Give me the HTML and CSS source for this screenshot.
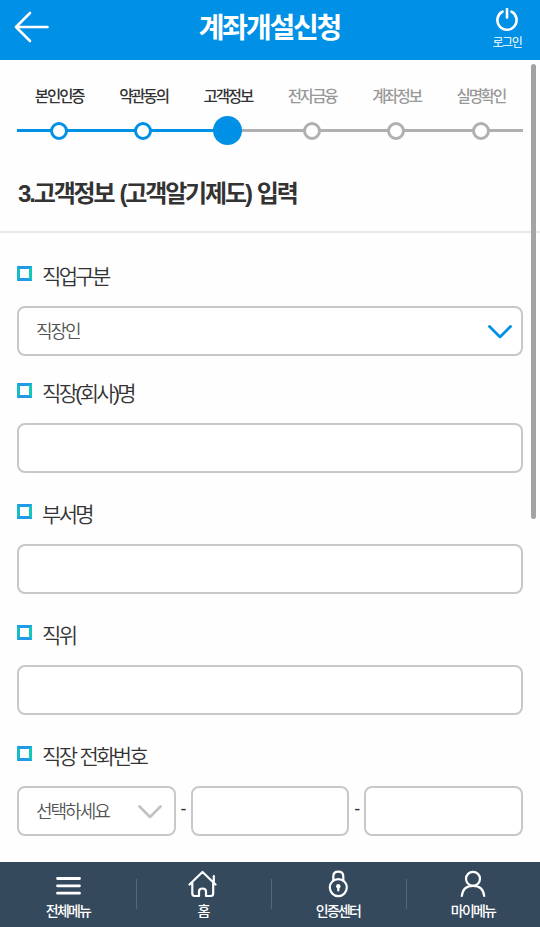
FILE: index.html
```html
<!DOCTYPE html>
<html lang="ko">
<head>
	<meta charset="UTF-8">
	<title>계좌개설신청</title>
	<link rel="stylesheet" href="styles.css">
</head>
<body>
	<div class="header">
		<a class="back">
			<svg width="36" height="32" viewBox="0 0 36 32"><path d="M16 2 2 16 16 30M2 16H33.500"/></svg>
		</a>
		<h1>계좌개설신청</h1>
		<a class="login">
			<svg width="24" height="24" viewBox="0 0 24 24"><path d="M7.500 3.700A9.600 9.600 0 1 0 16.500 3.700M12 1V9.500"/></svg>
			<span>로그인</span>
		</a>
	</div>

	<div class="content">
		<ul class="steps">
			<li class="done">본인인증<i></i></li>
			<li class="done">약관동의<i></i></li>
			<li class="on">고객정보<i></i></li>
			<li>전자금융<i></i></li>
			<li>계좌정보<i></i></li>
			<li>실명확인<i></i></li>
		</ul>
		<h2>3.고객정보 (고객알기제도) 입력</h2>

		<div class="form">
			<div class="row first">
				<label>직업구분</label>
				<div class="box select">
					<span>직장인</span>
					<svg width="24" height="14" viewBox="0 0 24 14"><path d="M1.500 1.500 12 12 22.500 1.500"/></svg>
				</div>
			</div>
			<div class="row">
				<label>직장(회사)명</label>
				<div class="box"></div>
			</div>
			<div class="row">
				<label>부서명</label>
				<div class="box"></div>
			</div>
			<div class="row">
				<label>직위</label>
				<div class="box"></div>
			</div>
			<div class="row">
				<label>직장 전화번호</label>
				<div class="phone">
					<div class="box select gray">
						<span>선택하세요</span>
						<svg width="24" height="14" viewBox="0 0 24 14"><path d="M1.500 1.500 12 12 22.500 1.500"/></svg>
					</div>
					<em>-</em>
					<div class="box"></div>
					<em>-</em>
					<div class="box"></div>
				</div>
			</div>
		</div>
		<div class="scrollbar"></div>
	</div>

	<ul class="nav">
		<li>
			<svg width="30" height="28" viewBox="0 0 30 28"><path d="M4.500 8.500H26.500M4.500 15.800H26.500M4.500 23.200H26.500" stroke-width="2.800"/></svg>
			<span>전체메뉴</span>
		</li>
		<li>
			<svg width="30" height="28" viewBox="0 0 30 28"><path d="M1.500 14.500 14.500 2 27.500 14.500M25.800 12V6M4.300 12.500V23.500Q4.300 26 6.800 26H11V21.500Q11 18.500 14.500 18.500T18 21.500V26H22.700Q25.200 26 25.200 23.500V12.500"/></svg>
			<span>홈</span>
		</li>
		<li>
			<svg width="30" height="28" viewBox="0 0 30 28"><circle cx="15.300" cy="17.600" r="8.500"/><path d="M10.300 10.500V6.500Q10.300 1.700 15.300 1.700T20.300 6.500V10.500M15.300 17V20.500"/><circle class="fill" cx="15.300" cy="16.300" r="2.200"/></svg>
			<span>인증센터</span>
		</li>
		<li>
			<svg width="30" height="28" viewBox="0 0 30 28"><circle cx="15" cy="8.800" r="7"/><path d="M3.800 26C4.500 19.500 8.500 15.800 15 15.800S25.500 19.500 26.200 26"/></svg>
			<span>마이메뉴</span>
		</li>
	</ul>
</body>
</html>
```

FILE: styles.css
```css
*,*:before{box-sizing:border-box;margin:0;padding:0;}
body{display:flex;flex-direction:column;height:927px;overflow:hidden;background:#fefefe;color:#333;font-family:"Liberation Sans","Noto Sans CJK KR",sans-serif;}
ul{list-style:none;}
svg{display:block;fill:none;stroke:#fff;stroke-width:2.2;stroke-linecap:round;stroke-linejoin:round;}

/* 상단 */
.header{display:flex;justify-content:space-between;height:60px;padding:0 17px 0 14px;background:#0091e6;color:#fff;}
.header h1{padding:9px 0 0 2px;font-size:28px;line-height:40px;letter-spacing:-2.2px;}
.back{width:32px;padding-top:11px;}
.back svg{stroke-width:2.6;}
.login{display:flex;flex-direction:column;align-items:center;width:32px;padding-top:8px;font-size:12px;line-height:18px;letter-spacing:-1.3px;white-space:nowrap;}
.login svg{width:24px;height:24px;stroke-width:2.6;}
.login span{margin-top:2px;}

/* 단계 */
.content{position:relative;flex:1;}
.steps{display:flex;margin:0 17px;padding-top:25px;background:linear-gradient(90deg,#0091e6 210px,#b0b0b0 210px) 0 69px/100% 3px no-repeat;}
.steps li{display:flex;flex-direction:column;align-items:center;flex:1;color:#999;font-size:15.500px;font-weight:500;line-height:24px;letter-spacing:-2.1px;}
.steps i{display:flex;align-items:center;justify-content:center;width:29px;height:29px;margin-top:7px;}
.steps i:before{content:"";width:18px;height:18px;border:3px solid #b0b0b0;border-radius:50%;background:#fff;}
.steps .done,.steps .on{color:#333;}
.steps .done i:before{border-color:#0091e6;}
.steps .on i:before{width:29px;height:29px;border:0;background:#0091e6;}
h2{height:88px;padding:30px 17px 0 18px;border-bottom:2px solid #e8e8e8;font-size:24px;line-height:38px;letter-spacing:-2.15px;word-spacing:1.5px;white-space:nowrap;}

/* 입력폼 */
.form{padding:0 17px;}
.row{padding-top:26px;}
.row.first{padding-top:28px;}
.row.first+.row{padding-top:22px;}
.row label{display:flex;align-items:center;height:28px;font-size:21px;font-weight:350;letter-spacing:-2.65px;word-spacing:1px;white-space:pre;}
.row label:before{content:"";width:15px;height:15px;margin:-3px 10px 0 0;border:3px solid;border-color:#219be8 #14c6bb #219be8 #18b9c9;}
.box{display:flex;align-items:center;flex:1;min-width:0;height:50px;margin-top:17px;border:2px solid #c8c8ca;border-radius:8px;background:#fff;}
.select{justify-content:space-between;padding:0 9px 2px 17px;color:#555;font-size:18px;font-weight:350;letter-spacing:-2px;}
.select svg{margin-top:3px;stroke:#0091e6;stroke-width:2.8;}
.phone{display:flex;}
.phone .box{flex:0 0 158.500px;}
.phone .gray{padding-right:12px;}
.gray svg{stroke:#c3c3c3;}
.phone em{width:15.200px;padding:30px 0 0 1px;font-style:normal;font-size:18px;text-align:center;}
.scrollbar{position:absolute;top:4px;right:4px;width:5px;height:455px;border-radius:3px;background:#a3a3a3;}

/* 하단 메뉴 */
.nav{display:flex;height:65px;background:#34495c;color:#fff;}
.nav li{position:relative;display:flex;flex-direction:column;align-items:center;flex:1;padding-top:8px;font-size:14px;font-weight:500;line-height:22px;letter-spacing:-1.8px;}
.nav li+li:before{content:"";position:absolute;left:1px;top:17px;width:1px;height:30px;background:#53687a;}
.nav span{margin-top:2px;padding-left:1px;}
.nav .fill{fill:#fff;stroke:none;}
```
